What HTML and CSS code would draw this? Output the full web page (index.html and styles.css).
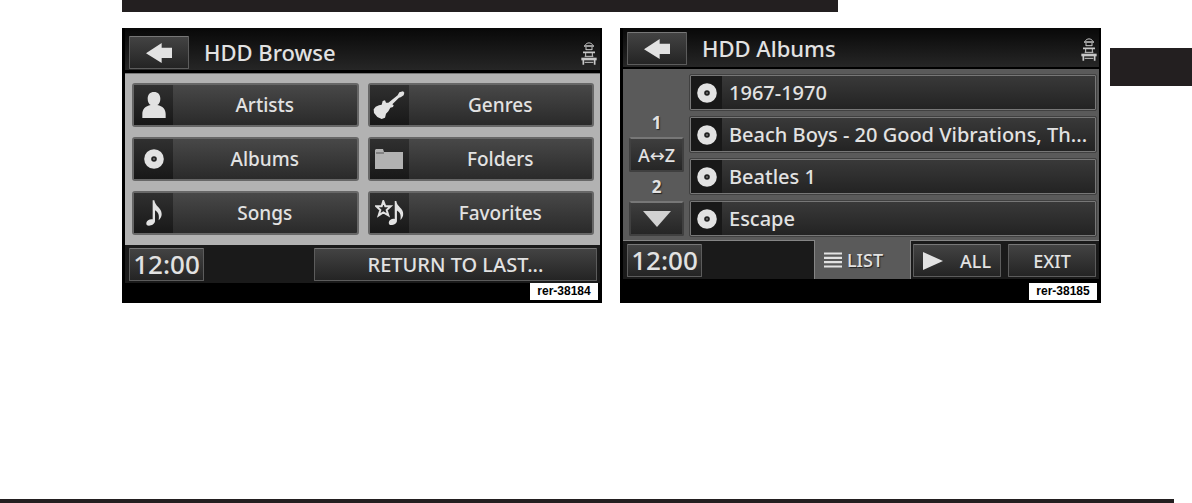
FILE: index.html
```
<!DOCTYPE html>
<html lang="en">
<head>
    <meta charset="UTF-8">
    <meta name="viewport" content="width=device-width, initial-scale=1.0">
    <title>HDD Browse</title>
    <link rel="stylesheet" href="styles.css">
</head>
<body>
    <svg class="symbols" width="0" height="0" aria-hidden="true">
        <symbol id="back" viewBox="0 0 78 60">
            <path d="M0 31 L47 0 V14 H78 V45 H47 V60 Z"/>
        </symbol>
        <symbol id="disc" viewBox="0 0 20 20">
            <circle cx="10" cy="10" r="9.8"/>
            <circle cx="10" cy="10" r="2.8" fill="#222"/>
            <circle cx="10" cy="10" r="1" fill="#777"/>
        </symbol>
        <symbol id="note" viewBox="0 0 48 78">
            <path d="M20 1 H25 C27 19 47 24 47 42 C47 50 43 56 38 61 C41 44 36 36 27 31 V64 C26 72 17 77 9 77 C3 77 0 73 1 68 C3 60 12 56 20 58 Z"/>
        </symbol>
        <symbol id="seat" viewBox="0 0 54 72">
            <g fill="none" stroke="#c8c8c8">
                <path d="M16 11 Q27 0 38 11 M18 18 V27 M36 18 V27 M18 26 H36 M17 36 V46 M37 36 V46 M14 46 H40 M14 64 H40" stroke-width="3"/>
                <path d="M12 15 H42 M9 34 H45 M10 56 V71 M44 56 V71" stroke-width="5"/>
                <path d="M4 54 H50" stroke-width="8"/>
            </g>
        </symbol>
    </svg>

    <div class="rule-top"></div>

    <main class="spread">
        <figure class="screen">
            <header class="bar">
                <button class="key back" aria-label="Back"><svg width="26" height="20"><use href="#back"/></svg></button>
                <h2>HDD Browse</h2>
                <svg class="seat" width="18" height="24"><use href="#seat"/></svg>
            </header>
            <div class="tiles">
                <button class="tile">
                    <span class="tile-icon"><svg width="24" height="26" viewBox="0 0 72 78"><path d="M36 0 C48 0 55 8 55 20 C55 30 51 36 46 39 C62 42 71 52 71 66 V78 H1 V66 C1 52 10 42 26 39 C21 36 17 30 17 20 C17 8 24 0 36 0 Z"/></svg></span>
                    <span class="tile-name">Artists</span>
                </button>
                <button class="tile">
                    <span class="tile-icon"><svg width="32" height="30" viewBox="0 0 96 90"><path d="M79 7 L90 4 L94 8 L92 16 L83 22 L78 23 L58 43 L62 46 L60 51 L52 53 L46 64 L39 71 L36 83 L26 87 L13 81 L3 69 L2 58 L8 50 L18 46 L26 44 L29 33 L36 31 L39 38 L46 38 L74 16 Z"/></svg></span>
                    <span class="tile-name">Genres</span>
                </button>
                <button class="tile">
                    <span class="tile-icon"><svg width="20" height="20"><use href="#disc"/></svg></span>
                    <span class="tile-name">Albums</span>
                </button>
                <button class="tile">
                    <span class="tile-icon"><svg width="28" height="20" viewBox="0 0 28 20"><path d="M0 20 V1 L1 0 H8 L9 3 H28 V20 Z" fill="#b2b2b2"/><path d="M1 4 H9" stroke="#555"/></svg></span>
                    <span class="tile-name">Folders</span>
                </button>
                <button class="tile">
                    <span class="tile-icon"><svg width="16" height="26"><use href="#note"/></svg></span>
                    <span class="tile-name">Songs</span>
                </button>
                <button class="tile">
                    <span class="tile-icon"><svg width="29" height="26" viewBox="0 0 87 78"><path d="M25 3 L31 19 L47 19 L35 30 L40 46 L25 37 L11 46 L16 30 L4 19 L20 19 Z" fill="none" stroke="#e2e2e2" stroke-width="6"/><use href="#note" x="40" y="2" width="46" height="74"/></svg></span>
                    <span class="tile-name">Favorites</span>
                </button>
            </div>
            <div class="dock">
                <span class="key clock">12:00</span>
                <button class="key return">RETURN TO LAST...</button>
            </div>
            <figcaption>rer-38184</figcaption>
        </figure>

        <figure class="screen albums">
            <header class="bar">
                <button class="key back" aria-label="Back"><svg width="26" height="20"><use href="#back"/></svg></button>
                <h2>HDD Albums</h2>
                <svg class="seat" width="18" height="24"><use href="#seat"/></svg>
            </header>
            <div class="browser">
                <nav class="pager">
                    <span class="page">1</span>
                    <button class="pager-key">A↔Z</button>
                    <span class="page">2</span>
                    <button class="pager-key" aria-label="Page down"><svg width="28" height="16" viewBox="0 0 28 16"><path d="M0 0 H28 L14 16 Z" fill="#d2d2d2"/></svg></button>
                </nav>
                <ul class="list">
                    <li><button class="row"><span class="row-icon"><svg width="20" height="20"><use href="#disc"/></svg></span>1967-1970</button></li>
                    <li><button class="row"><span class="row-icon"><svg width="20" height="20"><use href="#disc"/></svg></span>Beach Boys - 20 Good Vibrations, Th...</button></li>
                    <li><button class="row"><span class="row-icon"><svg width="20" height="20"><use href="#disc"/></svg></span>Beatles 1</button></li>
                    <li><button class="row"><span class="row-icon"><svg width="20" height="20"><use href="#disc"/></svg></span>Escape</button></li>
                </ul>
            </div>
            <div class="dock">
                <span class="key clock">12:00</span>
                <button class="tab-key"><svg width="18" height="16" viewBox="0 0 18 16"><path d="M0 1.5 H18 M0 5.8 H18 M0 10.2 H18 M0 14.5 H18" stroke="#e2e2e2" stroke-width="2.2"/></svg>LIST</button>
                <button class="key small play"><svg width="20" height="18" viewBox="0 0 20 18"><path d="M0 0 L20 9 L0 18 Z"/></svg>ALL</button>
                <button class="key small">EXIT</button>
            </div>
            <figcaption>rer-38185</figcaption>
        </figure>

        <div class="thumb-tab"></div>
    </main>

    <div class="rule-bottom"></div>
</body>
</html>
```
FILE: styles.css
```
* {
    box-sizing: border-box;
}
body {
    display: flex;
    flex-direction: column;
    min-height: 100vh;
    margin: 0;
    background-color: #fff;
    font-family: "Noto Sans", "DejaVu Sans", sans-serif;
    font-weight: 500;
}
button {
    margin: 0;
    padding: 0;
    font-family: inherit;
    font-weight: inherit;
    color: #e2e2e2;
    cursor: pointer;
}
svg {
    display: block;
    fill: #e2e2e2;
}
.symbols {
    position: absolute;
}
.rule-top {
    height: 12px;
    margin: 0 354px 16px 122px;
    background-color: #231f20;
}
.rule-bottom {
    height: 4px;
    margin: auto 18px 0 0;
    background-color: #231f20;
}
.spread {
    display: flex;
    padding-left: 122px;
}
.thumb-tab {
    flex: none;
    width: 82px;
    height: 38px;
    margin: 20px 0 0 9px;
    background-color: #231f20;
}

/* Radio screens */
.screen {
    display: flex;
    flex: 480 1 0;
    flex-direction: column;
    min-width: 0;
    margin: 0;
    padding: 0 2px 0 3px;
    background-color: #000;
    color: #e2e2e2;
}
.albums {
    flex-grow: 481;
    margin-left: 18px;
}
.bar {
    display: flex;
    align-items: center;
    padding: 8px 2px 1px 4px;
    border-bottom: 3px solid #000;
    background: linear-gradient(#080808, #262626);
}
.albums .bar {
    padding: 4px 1px 2px 4px;
    border-bottom-width: 2px;
}
.bar h2 {
    flex: 1;
    margin: 0 0 2px 15px;
    font-size: 22px;
    font-weight: 500;
    line-height: 30px;
}
.key {
    display: flex;
    align-items: center;
    justify-content: center;
    border: 1px solid #5c5c5c;
    border-top-color: #777;
    border-radius: 1px;
    background: linear-gradient(#434343, #242424);
}
.back {
    width: 60px;
    height: 33px;
}
.tiles {
    display: grid;
    grid-template-columns: 1fr 1fr;
    gap: 10px 9px;
    padding: 9px 6px 10px 7px;
    border-top: 1px solid #777;
    background-color: #b2b2b2;
}
.tile {
    display: flex;
    height: 44px;
    border: 2px solid #676767;
    border-radius: 3px;
    background: linear-gradient(#484848, #2a2a2a);
    font-size: 19px;
}
.tile-icon {
    display: flex;
    flex: none;
    align-items: center;
    justify-content: center;
    width: 39px;
    height: 40px;
    background: linear-gradient(#303030, #181818);
}
.tile-name {
    flex: 1;
    line-height: 40px;
}
.dock {
    display: flex;
    height: 38px;
    padding: 3px 3px 2px 4px;
    background-color: #1a1a1a;
}
.clock {
    width: 75px;
    padding-bottom: 2px;
    font-size: 26px;
    line-height: 30px;
}
.return {
    width: 283px;
    margin-left: auto;
    font-size: 20px;
}
figcaption {
    align-self: flex-end;
    width: 68px;
    margin: auto 2px 3px 0;
    background-color: #fff;
    color: #000;
    font: bold 12px/17px "Liberation Sans", Arial, sans-serif;
    text-align: center;
}

/* Album list */
.browser {
    display: flex;
    padding: 6px 3px 4px 6px;
    background-color: #5a5a5a;
}
.pager {
    display: flex;
    flex: none;
    flex-direction: column;
    justify-content: flex-end;
    width: 55px;
    margin-right: 6px;
    text-align: center;
}
.page {
    font-size: 17px;
    font-weight: 700;
    line-height: 29px;
    text-shadow: 1px 1px 1px #222;
}
.pager-key {
    display: flex;
    align-items: center;
    justify-content: center;
    height: 35px;
    border: 2px solid #404040;
    border-top-color: #777;
    border-radius: 2px;
    background: linear-gradient(#3e3e3e, #262626);
    font-size: 18px;
}
.list {
    display: grid;
    flex: 1;
    gap: 7px;
    min-width: 0;
    margin: 0;
    padding: 0;
    list-style: none;
}
.row {
    display: flex;
    align-items: center;
    width: 100%;
    height: 35px;
    border: 1px solid #777;
    border-radius: 1px;
    outline: 1px solid #404040;
    background: linear-gradient(#393939, #232323);
    font-size: 20px;
    line-height: 32px;
    white-space: nowrap;
}
.row-icon {
    display: flex;
    flex: none;
    align-items: center;
    justify-content: center;
    width: 31px;
    height: 33px;
    margin-right: 7px;
    background-color: #181818;
}
.albums .dock {
    height: 39px;
    padding: 0 3px 0 4px;
    border-top: 1px solid #858585;
}
.albums .key {
    height: 33px;
}
.albums .dock .key {
    margin-top: 3px;
}
.dock .tab-key {
    display: flex;
    align-items: center;
    justify-content: center;
    gap: 5px;
    width: 97px;
    margin: -1px 2px 0 auto;
    padding-right: 18px;
    padding-left: 0;
    border: 0;
    border-left: 1px solid #858585;
    border-right: 1px solid #858585;
    background-color: #5a5a5a;
    font-size: 18px;
    text-shadow: 1px 1px 1px #222;
}
.small {
    width: 88px;
    font-size: 18px;
}
.play {
    gap: 17px;
    margin-right: 7px;
}
```
